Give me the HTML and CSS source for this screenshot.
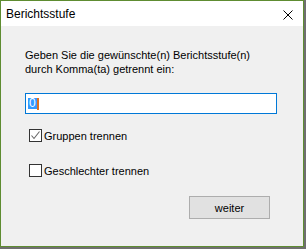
FILE: index.html
```html
<!DOCTYPE html>
<html lang="de">

<head>
    <meta charset="UTF-8">
    <title>Berichtsstufe</title>
    <link rel="stylesheet" href="styles.css">
</head>

<body>
    <div class="window">
        <div class="titlebar">
            <span class="title">Berichtsstufe</span>
            <svg class="close" width="10" height="10" viewBox="0 0 10 10">
                <path d="M0.5 0.5 L9.5 9.5 M9.5 0.5 L0.5 9.5" stroke="#000" stroke-width="1" fill="none" />
            </svg>
        </div>
        <div class="content">
            <p class="prompt">Geben Sie die gewünschte(n) Berichtsstufe(n)<br>durch Komma(ta) getrennt ein:</p>
            <div class="textbox"><span class="sel">0</span><span class="caret"></span></div>
            <label class="check">
                <span class="box">
                    <svg width="11" height="11" viewBox="0 0 11 11">
                        <path d="M1.5 5.5 L4 8.5 L9.5 1.5" stroke="#666" stroke-width="1.1" fill="none" />
                    </svg>
                </span>
                Gruppen trennen
            </label>
            <label class="check">
                <span class="box"></span>
                Geschlechter trennen
            </label>
            <div class="actions">
                <button class="btn">weiter</button>
            </div>
        </div>
    </div>
</body>

</html>
```

FILE: styles.css
```css
* {
    padding: 0;
    margin: 0;
    box-sizing: border-box;
}

body {
    width: 306px;
    height: 249px;
    background: #6f6f6f;
    font-family: "Liberation Sans", Arial, sans-serif;
    font-size: 11px;
    color: #000;
}

.window {
    width: 304px;
    height: 247px;
    border: 1px solid #5e8c31;
    background: #f0f0f0;
    display: flex;
    flex-direction: column;
}

.titlebar {
    height: 25px;
    background: #fff;
    display: flex;
    align-items: center;
    padding: 0 10px 0 5px;
}

.title {
    flex: 1;
    font-size: 12px;
    padding-top: 1px;
}

.close {
    margin-top: 3px;
}

.content {
    padding: 22px 0 0 24px;
}

.prompt {
    line-height: 14px;
}

.textbox {
    margin-top: 17px;
    width: 252px;
    height: 21px;
    border: 1px solid #0078d7;
    background: #fff;
    display: flex;
    align-items: center;
    padding-left: 2px;
}

.sel {
    background: #3399ff;
    color: #fff;
    font-size: 12px;
    line-height: 11px;
    padding: 0 1px;
}

.caret {
    width: 2px;
    height: 12px;
    background: #e07020;
}

.check {
    display: flex;
    align-items: center;
    gap: 2px;
    margin-left: 4px;
    height: 13px;
}

.textbox + .check {
    margin-top: 15px;
}

.check + .check {
    margin-top: 22px;
}

.box {
    width: 13px;
    height: 13px;
    border: 1px solid #333;
    background: #fff;
    display: flex;
    align-items: center;
    justify-content: center;
}

.actions {
    display: flex;
    justify-content: flex-end;
    padding-right: 33px;
    margin-top: 19px;
}

.btn {
    width: 81px;
    height: 23px;
    background: #e1e1e1;
    border: 1px solid #adadad;
    font-family: "Liberation Sans", Arial, sans-serif;
    font-size: 11px;
    color: #000;
}
```
